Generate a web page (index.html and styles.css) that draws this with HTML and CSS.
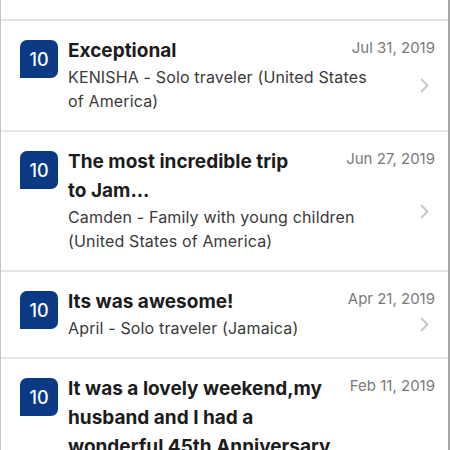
FILE: index.html
```html
<!DOCTYPE html>
<html lang="en">
<head>
<meta charset="utf-8">
<title>Reviews</title>
<link rel="stylesheet" href="styles.css">
</head>
<body>
<div class="list">
  <div class="prev"></div>

  <div class="item">
    <div class="badge">10</div>
    <div class="body">
      <div class="head">
        <div class="title">Exceptional</div>
        <div class="date">Jul 31, 2019</div>
      </div>
      <div class="sub">KENISHA - Solo traveler (United States of America)</div>
      <div class="chev"><svg width="9" height="15" viewBox="0 0 9 15"><path d="M1.5 1.5 L7.5 7.5 L1.5 13.5" fill="none" stroke="#c8c8cc" stroke-width="1.8" stroke-linecap="round" stroke-linejoin="round"/></svg></div>
    </div>
  </div>

  <div class="item">
    <div class="badge">10</div>
    <div class="body">
      <div class="head">
        <div class="title">The most incredible trip<br>to Jam...</div>
        <div class="date">Jun 27, 2019</div>
      </div>
      <div class="sub">Camden - Family with young children (United States of America)</div>
      <div class="chev"><svg width="9" height="15" viewBox="0 0 9 15"><path d="M1.5 1.5 L7.5 7.5 L1.5 13.5" fill="none" stroke="#c8c8cc" stroke-width="1.8" stroke-linecap="round" stroke-linejoin="round"/></svg></div>
    </div>
  </div>

  <div class="item">
    <div class="badge">10</div>
    <div class="body">
      <div class="head">
        <div class="title">Its was awesome!</div>
        <div class="date">Apr 21, 2019</div>
      </div>
      <div class="sub">April - Solo traveler (Jamaica)</div>
      <div class="chev"><svg width="9" height="15" viewBox="0 0 9 15"><path d="M1.5 1.5 L7.5 7.5 L1.5 13.5" fill="none" stroke="#c8c8cc" stroke-width="1.8" stroke-linecap="round" stroke-linejoin="round"/></svg></div>
    </div>
  </div>

  <div class="item">
    <div class="badge">10</div>
    <div class="body">
      <div class="head">
        <div class="title">It was a lovely weekend,my husband and I had a wonderful 45th Anniversary</div>
        <div class="date">Feb 11, 2019</div>
      </div>
    </div>
  </div>
</div>
</body>
</html>
```

FILE: styles.css
```css
html, body {
  margin: 0;
  padding: 0;
  background: #ffffff;
}

body {
  font-family: Inter, "Noto Sans", sans-serif;
  overflow: hidden;
  height: 450px;
}

.list {
  box-sizing: border-box;
  width: 450px;
  height: 450px;
  border-left: 1px solid #c4c4c4;
  border-right: 2px solid #a6a6a6;
  overflow: hidden;
}

.prev {
  height: 19px;
}

.item {
  display: flex;
  gap: 10px;
  padding: 15px 13px 17px 19px;
  border-top: 2px solid #e4e4e4;
}

.badge {
  flex: 0 0 auto;
  width: 38px;
  height: 38px;
  margin-top: 4px;
  background: #0b3a84;
  color: #ffffff;
  border-radius: 7px 7px 7px 0;
  display: flex;
  align-items: center;
  justify-content: center;
  font-size: 18px;
  font-weight: 500;
}

.body {
  flex: 1;
  display: grid;
  grid-template-columns: 1fr 62px;
}

.head {
  grid-column: 1 / 3;
  grid-row: 1;
  display: flex;
  align-items: flex-start;
  gap: 16px;
}

.title {
  flex: 1;
  font-size: 19px;
  line-height: 29px;
  font-weight: 700;
  color: #1c1c1c;
}

.date {
  flex: 0 0 auto;
  margin-top: 2px;
  font-size: 15px;
  line-height: 20px;
  color: #7a7a7a;
}

.sub {
  grid-column: 1;
  grid-row: 2;
  font-size: 16px;
  line-height: 24px;
  letter-spacing: 0.15px;
  color: #3a3a3a;
}

.chev {
  grid-column: 2;
  grid-row: 1 / 3;
  align-self: center;
  justify-self: end;
  margin-top: 22px;
  margin-right: 6px;
  display: flex;
}
```
